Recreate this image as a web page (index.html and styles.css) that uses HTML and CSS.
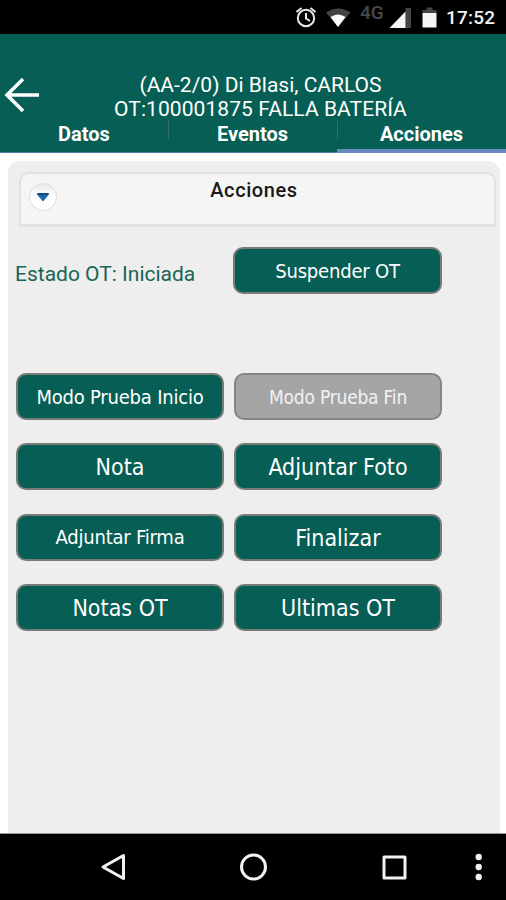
FILE: index.html
```html
<!DOCTYPE html>
<html lang="es">
<head>
<meta charset="utf-8">
<title>Acciones</title>
<link rel="stylesheet" href="styles.css">
</head>
<body>
<div class="screen">
  <div class="status">
    <svg class="status-icons" width="156" height="34" viewBox="0 0 156 34">
      <g fill="none" stroke="#e8e8e8" stroke-width="2">
        <circle cx="20" cy="18" r="8.200"/>
        <path d="M20 13v5.500l4 2.500M10.500 12l5-4M29.500 12l-5-4"/>
      </g>
      <path d="M40 12.500Q52 4.500 64.500 12.500L52 27z" fill="#444"/>
      <path d="M44.500 17Q52 12 59.500 17L52 27z" fill="#fff"/>
      <path d="M119.500 8h5.500v20h-5.500z" fill="#444"/>
      <path d="M103.500 28L119.500 11.500V28z" fill="#f5f5f5"/>
      <path d="M136.500 10h4V7.500h6V10h4v3h-14z" fill="#444"/>
      <path d="M136.500 13h14v14.500h-14z" fill="#f5f5f5"/>
    </svg>
    <span class="network">4G</span>
    <span class="clock">17:52</span>
  </div>
  <header class="header">
    <svg class="back" width="36" height="36" viewBox="0 0 36 36" fill="none" stroke="#fff" stroke-width="3.500"><path d="M35 18H3M19 2L3 18l16 16"/></svg>
    <h1 class="title"><span class="name">(AA-2/0) Di Blasi, CARLOS</span><span class="order">OT:100001875 FALLA BATERÍA</span></h1>
    <nav class="tabs">
      <a class="tab">Datos</a>
      <a class="tab">Eventos</a>
      <a class="tab active">Acciones</a>
    </nav>
  </header>
  <main class="content">
    <section class="panel">
      <div class="section-head">
        <span class="toggle"><svg width="12" height="9" viewBox="0 0 12 9"><path d="M.5 0h11v2L6.500 8h-1L.5 2z" fill="#1768ad"/><path d="M.5 0h11v2H.5z" fill="#174c7c"/></svg></span>
        <h2 class="section-title">Acciones</h2>
      </div>
      <div class="state-row">
        <span class="state">Estado OT: Iniciada</span>
        <button class="btn small suspend">Suspender OT</button>
      </div>
      <div class="actions">
        <button class="btn small">Modo Prueba Inicio</button>
        <button class="btn small off">Modo Prueba Fin</button>
        <button class="btn">Nota</button>
        <button class="btn">Adjuntar Foto</button>
        <button class="btn small">Adjuntar Firma</button>
        <button class="btn">Finalizar</button>
        <button class="btn">Notas OT</button>
        <button class="btn">Ultimas OT</button>
      </div>
    </section>
  </main>
  <footer class="navbar">
    <svg width="506" height="66" viewBox="0 0 506 66" fill="none" stroke="#f2f2f2" stroke-width="3" stroke-linejoin="round">
      <path d="M123.500 21.500v23L103 33z"/>
      <circle cx="253.500" cy="33" r="12"/>
      <path d="M384 23h21v21h-21z"/>
      <g fill="#f2f2f2" stroke="none"><circle cx="478.700" cy="23" r="3.200"/><circle cx="478.700" cy="33" r="3.200"/><circle cx="478.700" cy="43" r="3.200"/></g>
    </svg>
  </footer>
</div>
</body>
</html>
```
FILE: styles.css
```css
* { box-sizing: border-box; }
body { margin: 0; font-family: Roboto, sans-serif; }
.screen { width: 506px; height: 900px; display: flex; flex-direction: column; background: #fff; overflow: hidden; }

.status { position: relative; height: 34px; display: flex; align-items: center; justify-content: flex-end; padding-right: 11px; background: #000; color: #f2f2f2; }
.status-icons { margin-right: 4px; }
.network { position: absolute; left: 360px; top: 2px; font-size: 19px; line-height: 22px; font-weight: 500; color: #484848; }
.clock { width: 49px; font-size: 19px; line-height: 22px; font-weight: 500; padding-top: 2px; white-space: nowrap; letter-spacing: .2px; }

.header { position: relative; height: 119px; display: flex; flex-direction: column; padding-top: 39px; background: #075e54; color: #fff; }
.back { position: absolute; left: 4px; top: 43px; }
.title { margin: 0; padding-left: 15px; display: flex; flex-direction: column; align-items: center; font-size: 21px; line-height: 24px; font-weight: 400; white-space: nowrap; }
.order { letter-spacing: .07px; }
.tabs { flex: 1; display: grid; grid-template-columns: 168px 169px 169px; }
.tab { position: relative; padding-top: 2px; text-align: center; font-size: 20px; line-height: 23px; font-weight: 700; border-bottom: 1px solid #4c7da0; }
.tab + .tab::before { content: ""; position: absolute; left: 0; top: 0; width: 1px; height: 18px; background: #3d6d68; }
.tab.active { border-bottom: 4px solid #6889c0; }

.content { height: 681px; padding: 8px 6px 0 8px; border-bottom: 1px solid #999; }
.panel { height: 672px; padding: 11px 4px 0 8px; background: #eee; border-radius: 12px 12px 0 0; }
.section-head { position: relative; height: 55px; margin-left: 3px; padding-top: 5px; background: #f5f5f5; border: 2px solid #e1e1e1; border-bottom-width: 3px; border-radius: 10px 10px 0 0; }
.toggle { position: absolute; left: 8px; top: 9px; width: 28px; height: 28px; display: flex; align-items: center; justify-content: center; border: 1px solid #ddd; border-radius: 50%; background: linear-gradient(#e9e9e9, #fff 45%); }
.section-title { margin: 0; padding-right: 7px; text-align: center; font-size: 20px; line-height: 23px; font-weight: 500; letter-spacing: .6px; color: #191919; }

.state-row { display: flex; justify-content: space-between; align-items: center; width: 426px; margin-top: 20px; height: 47px; }
.state { margin-left: -1px; padding-top: 7px; font-size: 21px; line-height: 24px; color: #176552; white-space: nowrap; }
.actions { display: grid; grid-template-columns: 208px 208px; grid-auto-rows: 47px; gap: 23.300px 10px; margin-top: 79px; }
.btn { width: 100%; height: 47px; margin: 0; padding: 1px 0 0; border: 2px solid #777c79; border-radius: 10px; background: #075e54; color: #fff; font-family: "DejaVu Sans Condensed", "DejaVu Sans", sans-serif; font-stretch: condensed; font-size: 23px; line-height: 28px; white-space: nowrap; }
.btn.small { padding-top: 0; font-size: 20px; letter-spacing: -.2px; }
.btn.suspend { width: 209px; }
.btn.off { background: #a5a5a5; border-color: #858585; color: #f2f2f2; font-size: 19px; }
.navbar { height: 66px; background: #000; }
.navbar svg { display: block; }
```
